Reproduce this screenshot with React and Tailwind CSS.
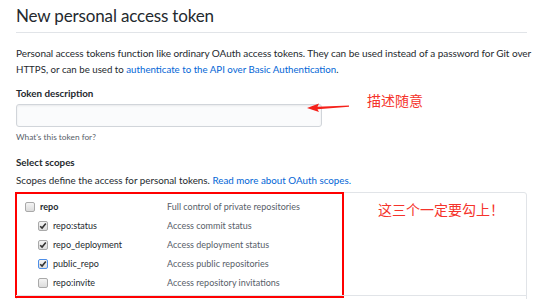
const font = { fontFamily: 'Lato, "Noto Sans CJK SC", sans-serif' };

function Box({ checked, focus }) {
  return (
    <span
      className={`inline-flex h-[10px] w-[10px] shrink-0 items-center justify-center rounded-[2px] border bg-gradient-to-b from-[#f4f4f4] to-[#dcdcdc] ${
        focus ? "border-[#4d8ee8]" : "border-[#a9a9a9]"
      }`}
    >
      {checked && (
        <svg width="8" height="8" viewBox="0 0 8 8">
          <path d="M1.2 4.2 L3.1 6.1 L6.8 1.6" fill="none" stroke="#333" strokeWidth="1.6" />
        </svg>
      )}
    </span>
  );
}

function Row({ name, desc, checked, focus, sub, bold }) {
  return (
    <div className="flex h-[19px] items-center">
      <div className={`flex w-[150px] items-center ${sub ? "pl-[21px]" : "pl-[8px]"}`}>
        <Box checked={checked} focus={focus} />
        <span className={`ml-[5px] text-[9px] text-[#24292e] ${bold ? "font-bold" : ""}`}>{name}</span>
      </div>
      <span className="text-[9px] text-[#586069]">{desc}</span>
    </div>
  );
}

export default function App() {
  return (
    <div className="relative h-[299px] w-[550px] overflow-hidden bg-white" style={font}>
      <div className="pl-[16px] pr-[23px]">
        <h1 className="border-b border-[#e1e4e8] pb-[5px] pt-[4px] text-[17px] font-normal leading-[23px] tracking-[-0.15px] text-[#24292e]">
          New personal access token
        </h1>
        <p className="mt-[12px] whitespace-nowrap text-[9.7px] leading-[16px] text-[#24292e]">
          <span className="text-[10px] tracking-[-0.05px]">
            Personal access tokens function like ordinary OAuth access tokens. They can be used instead of a password for Git over
          </span>
          <br />
          HTTPS, or can be used to <span className="text-[#0366d6]">authenticate to the API over Basic Authentication</span>.
        </p>
        <div className="mt-[9px] text-[9.8px] font-bold leading-[14px] text-[#24292e]">Token description</div>
        <div className="relative mt-[4px] flex items-start">
          <div className="h-[23px] w-[306px] rounded-[3px] border border-[#d1d5da] bg-[#fafbfc] shadow-[inset_0_1px_2px_rgba(27,31,35,0.075)]" />
          <svg className="ml-[-15px] mt-[-1px]" width="42" height="9" viewBox="0 0 42 9">
            <path d="M0 5 L12 0.5 L10.5 3.8 L42 2.4 L42 3.8 L10.5 6.2 L12 9 Z" fill="#f5211a" />
          </svg>
          <span className="ml-[18px] mt-[-12px] text-[14px] leading-[18px] text-[#f5332b]">描述随意</span>
        </div>
        <div className="mt-[4px] text-[8.3px] leading-[12px] text-[#586069]">What's this token for?</div>
        <div className="mt-[12px] text-[9.8px] font-bold leading-[14px] text-[#24292e]">Select scopes</div>
        <p className="mt-[4px] text-[9.8px] leading-[14px] text-[#24292e]">
          Scopes define the access for personal tokens. <span className="text-[#0366d6]">Read more about OAuth scopes.</span>
        </p>
        <div className="mt-[5px] flex h-[120px] rounded-t-[3px] border border-[#e1e4e8]">
          <div className="ml-[-2px] mt-[-1px] flex h-[106px] w-[329px] flex-col justify-center border-2 border-[#f00]">
            <Row name="repo" desc="Full control of private repositories" bold />
            <Row name="repo:status" desc="Access commit status" checked sub />
            <Row name="repo_deployment" desc="Access deployment status" checked sub />
            <Row name="public_repo" desc="Access public repositories" checked focus sub />
            <Row name="repo:invite" desc="Access repository invitations" sub />
          </div>
          <span className="ml-[34px] mt-[8px] text-[14px] leading-[18px] text-[#f5332b]">这三个一定要勾上！</span>
        </div>
      </div>
      <div className="absolute left-[16px] top-[295px] h-px w-[511px] bg-[#e1e4e8]" />
    </div>
  );
}
